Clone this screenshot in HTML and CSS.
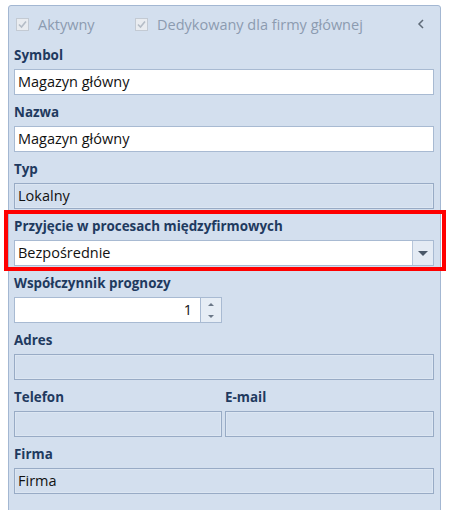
FILE: index.html
```html
<!DOCTYPE html>
<html lang="pl">
<head>
  <meta charset="UTF-8">
  <title>Magazyn</title>
  <link rel="stylesheet" href="styles.css">
</head>
<body>
<div class="panel">
  <div class="checks">
    <label class="check"><span class="box">
      <svg width="11" height="11" viewBox="0 0 11 11"><path d="M2 5.5 L4.5 8 L9 2.5" fill="none" stroke="#b4bcc6" stroke-width="1.6"/></svg>
    </span>Aktywny</label>
    <label class="check check-wide"><span class="box">
      <svg width="11" height="11" viewBox="0 0 11 11"><path d="M2 5.5 L4.5 8 L9 2.5" fill="none" stroke="#b4bcc6" stroke-width="1.6"/></svg>
    </span>Dedykowany dla firmy głównej</label>
    <span class="collapse">
      <svg width="8" height="10" viewBox="0 0 8 10"><path d="M6 1 L2 5 L6 9" fill="none" stroke="#5f6b78" stroke-width="1.5"/></svg>
    </span>
  </div>

  <div class="group">
    <div class="label">Symbol</div>
    <div class="field">Magazyn główny</div>
  </div>
  <div class="group">
    <div class="label">Nazwa</div>
    <div class="field">Magazyn główny</div>
  </div>
  <div class="group">
    <div class="label">Typ</div>
    <div class="field disabled">Lokalny</div>
  </div>
  <div class="group marked">
    <div class="label">Przyjęcie w procesach międzyfirmowych</div>
    <div class="field select">
      <span class="value">Bezpośrednie</span>
      <span class="drop"><span class="tri-down"></span></span>
    </div>
  </div>
  <div class="group">
    <div class="label">Współczynnik prognozy</div>
    <div class="spin">
      <div class="field num">1</div>
      <div class="spin-btns">
        <span class="spin-up"><span class="tri-up small"></span></span>
        <span class="spin-down"><span class="tri-down small"></span></span>
      </div>
    </div>
  </div>
  <div class="group">
    <div class="label">Adres</div>
    <div class="field disabled"></div>
  </div>
  <div class="group cols">
    <div>
      <div class="label">Telefon</div>
      <div class="field disabled"></div>
    </div>
    <div>
      <div class="label">E-mail</div>
      <div class="field disabled"></div>
    </div>
  </div>
  <div class="group">
    <div class="label">Firma</div>
    <div class="field disabled">Firma</div>
  </div>
</div>
</body>
</html>
```

FILE: styles.css
```css
* { box-sizing: border-box; margin: 0; padding: 0; }
body {
  background: #fff;
  font-family: 'Open Sans', 'Noto Sans', sans-serif;
  font-size: 14.5px;
  color: #111;
}
.panel {
  margin: 5px 0 0 8px;
  width: 433px;
  min-height: 520px;
  background: #d3dfee;
  border: 1px solid #a3b7d2;
  border-radius: 3px 3px 0 0;
  padding: 0 6px 0 5px;
}
.checks {
  display: flex;
  align-items: center;
  height: 36px;
  margin-bottom: 5px;
  color: #8c9bb0;
  font-size: 14.5px;
}
.check {
  display: flex;
  align-items: center;
  margin-left: 2px;
  width: 117px;
}
.check-wide { width: auto; }
.box {
  width: 13px;
  height: 13px;
  border: 1px solid #c3cad3;
  background: #e9ecf0;
  margin-right: 9px;
  display: flex;
  align-items: center;
  justify-content: center;
}
.collapse {
  margin-left: auto;
  margin-right: 9px;
  display: flex;
}
.group {
  margin-bottom: 9px;
}
.label {
  height: 18px;
  line-height: 16px;
  margin-bottom: 4px;
  font-size: 13.4px;
  font-weight: bold;
  color: #1f3a5f;
}
.field {
  height: 26px;
  line-height: 24px;
  padding: 0 3px;
  background: #fff;
  border: 1px solid #a8bad2;
  white-space: nowrap;
}
.field.disabled {
  background: #d3dfee;
  border-color: #98abc5;
  box-shadow: inset 0 0 0 1px #dce6f2;
}
.marked { position: relative; }
.marked::after {
  content: "";
  position: absolute;
  top: -8px;
  bottom: -5px;
  left: -10px;
  right: -12px;
  border: 4px solid #f00;
}
.select {
  display: flex;
  padding-right: 0;
}
.select .value { flex: 1; }
.drop {
  width: 21px;
  border-left: 1px solid #b7c6da;
  background: #e4ebf4;
  display: flex;
  align-items: center;
  justify-content: center;
}
.tri-down {
  width: 0; height: 0;
  border-left: 5px solid transparent;
  border-right: 5px solid transparent;
  border-top: 5px solid #4a5868;
}
.tri-up {
  width: 0; height: 0;
  border-left: 3px solid transparent;
  border-right: 3px solid transparent;
  border-bottom: 3px solid #6b7888;
}
.tri-down.small {
  border-left-width: 3px;
  border-right-width: 3px;
  border-top: 3px solid #6b7888;
}
.spin {
  display: flex;
  width: 208px;
}
.num {
  flex: 1;
  text-align: right;
  padding-right: 8px;
}
.spin-btns {
  width: 21px;
  height: 26px;
  display: flex;
  flex-direction: column;
  background: #e6edf5;
  border: 1px solid #a8bad2;
  border-left: none;
}
.spin-up, .spin-down {
  flex: 1;
  display: flex;
  align-items: center;
  justify-content: center;
}
.cols {
  display: grid;
  grid-template-columns: 208px 1fr;
  gap: 3px;
}
```
